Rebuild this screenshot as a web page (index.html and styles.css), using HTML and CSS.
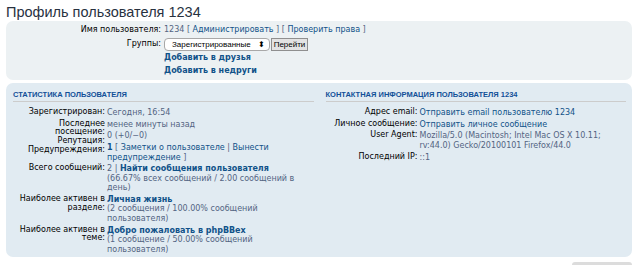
FILE: index.html
```html
<!DOCTYPE html>
<html lang="ru">
<head>
<meta charset="utf-8">
<title>Профиль пользователя 1234</title>
<link rel="stylesheet" href="styles.css">
</head>
<body>

  <h2 class="page-title">Профиль пользователя 1234</h2>

  <div class="panel panel-top">
    <dl class="left-box">
      <dt>Имя пользователя:</dt>
      <dd>1234 [ <a href="#">Администрировать</a> ] [ <a href="#">Проверить права</a> ]</dd>
      <dt>Группы:</dt>
      <dd>
        <span class="fake-select">Зарегистрированные <span class="arrows">&#x2B0D;</span></span><button class="btn">Перейти</button>
      </dd>
      <dd><a class="strong" href="#">Добавить в друзья</a></dd>
      <dd><a class="strong" href="#">Добавить в недруги</a></dd>
    </dl>
  </div>

  <div class="panel panel-bottom">
    <div class="column">
      <h3>Статистика пользователя</h3>
      <dl class="details">
        <dt>Зарегистрирован:</dt>
        <dd>Сегодня, 16:54</dd>
        <dt>Последнее посещение:</dt>
        <dd>менее минуты назад</dd>
        <dt>Репутация:</dt>
        <dd>0 (+0/−0)</dd>
        <dt>Предупреждения:</dt>
        <dd><b class="num">1</b> [ <a href="#">Заметки о пользователе</a> | <a href="#">Вынести предупреждение</a> ]</dd>
        <dt>Всего сообщений:</dt>
        <dd>2 | <a class="strong" href="#">Найти сообщения пользователя</a><br>(66.67% всех сообщений / 2.00 сообщений в день)</dd>
        <dt>Наиболее активен в разделе:</dt>
        <dd><a class="strong" href="#">Личная жизнь</a><br>(2 сообщения / 100.00% сообщений пользователя)</dd>
        <dt>Наиболее активен в теме:</dt>
        <dd><a class="strong" href="#">Добро пожаловать в phpBBex</a><br>(1 сообщение / 50.00% сообщений пользователя)</dd>
      </dl>
    </div>
    <div class="column">
      <h3>Контактная информация пользователя 1234</h3>
      <dl class="details">
        <dt>Адрес email:</dt>
        <dd><a href="#">Отправить email пользователю 1234</a></dd>
        <dt>Личное сообщение:</dt>
        <dd><a href="#">Отправить личное сообщение</a></dd>
        <dt>User Agent:</dt>
        <dd>Mozilla/5.0 (Macintosh; Intel Mac OS X 10.11; rv:44.0) Gecko/20100101 Firefox/44.0</dd>
        <dt>Последний IP:</dt>
        <dd>::1</dd>
      </dl>
    </div>
  </div>

  <div class="jumpbox"></div>

</body>
</html>
```

FILE: styles.css
```css
body {
  margin: 0;
  padding: 0 7px 0 6px;
  background-color: #fff;
  font-family: "DejaVu Sans", Verdana, sans-serif;
  font-size: 8px;
  line-height: 9.5px;
  color: #536482;
}

a {
  color: #105289;
  text-decoration: none;
}

a.strong {
  font-weight: bold;
}

.page-title {
  margin: 0;
  padding: 4px 0 0 0;
  height: 17px;
  font-family: "Liberation Sans", Arial, sans-serif;
  font-weight: normal;
  font-size: 14.5px;
  line-height: 17px;
  color: #28313f;
}

.panel {
  border-radius: 7px;
}

.panel-top {
  height: 59px;
  background-color: #ecf1f3;
  padding: 2px 0 0 0;
  box-sizing: border-box;
}

.panel-top dl {
  margin: 0;
}

.panel-top dt {
  float: left;
  clear: left;
  width: 155px;
  text-align: right;
  color: #000;
  line-height: 13.5px;
}

.panel-top dd {
  margin: 0 0 0 158px;
  line-height: 13.5px;
  min-height: 13.5px;
}

.fake-select {
  display: inline-block;
  box-sizing: border-box;
  width: 106px;
  height: 13px;
  margin-top: 1px;
  padding: 0 0 0 7px;
  border: 1px solid #a8a8a8;
  border-radius: 4px;
  background-color: #fff;
  font-family: "Liberation Sans", Arial, sans-serif;
  font-size: 8px;
  color: #000;
  line-height: 11px;
  vertical-align: top;
  position: relative;
}

.fake-select .arrows {
  position: absolute;
  right: 4px;
  top: 0;
  font-family: "DejaVu Sans", sans-serif;
  font-size: 8px;
}

.btn {
  display: inline-block;
  box-sizing: border-box;
  width: 37px;
  height: 13px;
  margin: 1px 0 0 1px;
  padding: 0;
  border: 1px solid #8f8f8f;
  background-color: #e3e3e3;
  font-family: "Liberation Sans", Arial, sans-serif;
  font-size: 8px;
  line-height: 11px;
  color: #000;
  vertical-align: top;
}

.panel-bottom {
  margin-top: 3px;
  height: 174px;
  background-color: #e1ebf2;
  display: flex;
  padding: 7px 6px 0 7px;
  box-sizing: border-box;
  gap: 12px;
}

.column {
  flex: 1;
}

h3 {
  margin: 0 0 6px 0;
  padding-bottom: 1px;
  border-bottom: 1px solid #ccc;
  font-family: "Liberation Sans", Arial, sans-serif;
  font-size: 7.5px;
  line-height: 10px;
  text-transform: uppercase;
  color: #115098;
}

.details {
  margin: 0;
}

.details dt {
  float: left;
  clear: left;
  width: 92px;
  text-align: right;
  color: #000;
  line-height: 8.8px;
}

.details dd {
  margin: 0 0 2.2px 94px;
}

.num {
  color: #105289;
}

.jumpbox {
  margin: 5px 0 0 auto;
  width: 60px;
  height: 4px;
  background-color: #dcdcdc;
  border-radius: 3px 3px 0 0;
}
```
